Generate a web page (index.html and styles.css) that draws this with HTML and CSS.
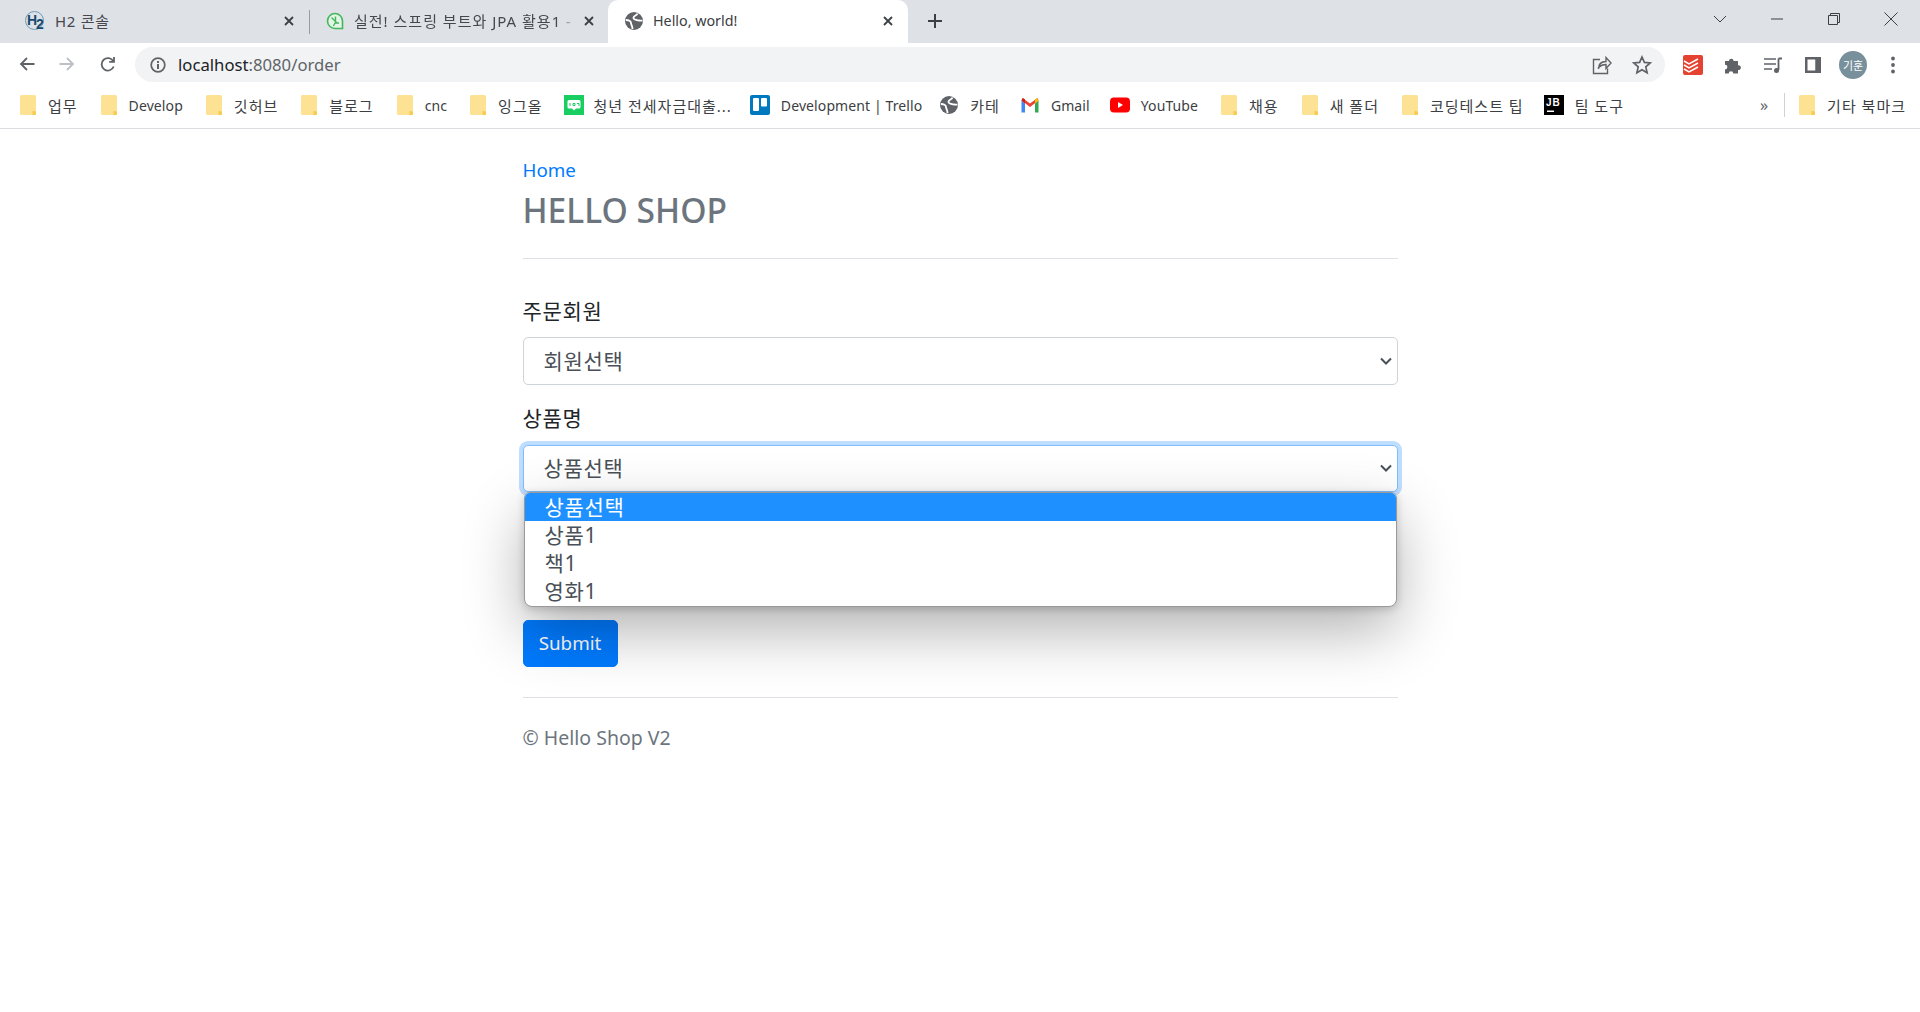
FILE: index.html
```html
<!DOCTYPE html>
<html lang="ko">
<head>
    <meta charset="UTF-8">
    <title>Hello, world!</title>
    <link rel="stylesheet" href="styles.css">
</head>
<body>
    <svg class="defs" width="0" height="0">
        <symbol id="folder" viewBox="0 0 16 20">
            <path d="M1.5 0h13a1.5 1.5 0 0 1 1.500 1.500v17a1.500 1.500 0 0 1-1.500 1.500h-13a1.500 1.500 0 0 1-1.500-1.500v-17a1.500 1.500 0 0 1 1.500-1.500z" fill="#fde293"/>
            <path d="M12.500 20v-4h1.500a2 2 0 0 1 2 2v.5a1.500 1.500 0 0 1-1.500 1.500z" fill="#f7cb4d"/>
        </symbol>
        <symbol id="globe" viewBox="0 0 18 18">
            <circle cx="9" cy="9" r="9" fill="#5f6368"/>
            <path d="M12.500 1.500c-.5 2-3.500 2-4 4s2.500 2.500 4.500 2.800 3 .7 4.500.2M.8 8c3 0 5.200 1 5.200 3s1.500 2.500 1.500 6" fill="none" stroke="#fff" stroke-width="1.800"/>
        </symbol>
    </svg>

    <div class="tabstrip">
        <div class="tab">
            <svg class="favicon favicon-h2" viewBox="0 0 20 22">
                <circle cx="9.500" cy="9.500" r="9" fill="none" stroke="#6d9ab5" stroke-width="1"/>
                <text x="2" y="14" class="h2-logo">H</text>
                <text x="11" y="18" class="h2-logo">2</text>
            </svg>
            <span class="tab-title">H2 콘솔</span>
            <svg class="tab-close" viewBox="0 0 10 10"><path d="M1 1l8 8M9 1l-8 8"/></svg>
        </div>
        <div class="tab tab-sep">
            <svg class="favicon" viewBox="0 0 18 18">
                <path d="M9 1.500a7.500 7.500 0 0 1 7.500 7.500v7.500h-7.500a7.500 7.500 0 0 1 0-15z" fill="#e3f5e6" stroke="#43b75a" stroke-width="1.600"/>
                <path d="M5.500 5.500l5 5M9.500 4.500v6.500h3.500M9 11l-1.500 3" fill="none" stroke="#43b75a" stroke-width="1.400"/>
            </svg>
            <span class="tab-title tab-title-fade">실전! 스프링 부트와 JPA 활용1 -</span>
            <svg class="tab-close" viewBox="0 0 10 10"><path d="M1 1l8 8M9 1l-8 8"/></svg>
        </div>
        <div class="tab tab-active">
            <svg class="favicon" viewBox="0 0 18 18"><use href="#globe"/></svg>
            <span class="tab-title">Hello, world!</span>
            <svg class="tab-close" viewBox="0 0 10 10"><path d="M1 1l8 8M9 1l-8 8"/></svg>
        </div>
        <svg class="new-tab" viewBox="0 0 14 14"><path d="M7 0v14M0 7h14"/></svg>
        <div class="window-controls">
            <svg class="win-icon" viewBox="0 0 14 14"><path d="M1 4l6 6 6-6"/></svg>
            <svg class="win-icon" viewBox="0 0 14 14"><path d="M1 7h12"/></svg>
            <svg class="win-icon" viewBox="0 0 14 14"><path d="M1.500 3.500h9v9h-9zM3.500 3.500v-2h9v9h-2"/></svg>
            <svg class="win-icon" viewBox="0 0 14 14"><path d="M0.500 0.500l13 13M13.500 0.500l-13 13"/></svg>
        </div>
    </div>

    <div class="toolbar">
        <svg class="nav-icon" viewBox="0 0 16 16"><path d="M15.500 8h-13M8 2l-6 6 6 6"/></svg>
        <svg class="nav-icon nav-disabled" viewBox="0 0 16 16"><path d="M.5 8h13M8 2l6 6-6 6"/></svg>
        <svg class="nav-icon nav-reload" viewBox="0 0 16 16"><path d="M13.700 10.500a6.200 6.200 0 1 1-.4-5.200M14 1v4.800h-4.800"/></svg>
        <div class="omnibox">
            <svg class="info-icon" viewBox="0 0 16 16">
                <circle cx="8" cy="8" r="6.800" fill="none" stroke="#5f6368" stroke-width="1.700"/>
                <path d="M7 7h2v5h-2zM7 4h2v2h-2z" fill="#5f6368"/>
            </svg>
            <span class="url">localhost<span class="url-path">:8080/order</span></span>
            <svg class="omni-icon share-icon" viewBox="0 0 20 20">
                <path d="M8 4.500h-6.500v14h14v-5M6.500 14c0-5 3-7.500 7.500-7.500v-4l5 5.500-5 5.500v-4c-3 0-5.500 1-7.500 3z" fill="none" stroke="#5f6368" stroke-width="1.400"/>
            </svg>
            <svg class="omni-icon" viewBox="0 0 20 20">
                <path d="M10 2l2.400 5.400 5.800.6-4.400 3.900 1.300 5.800-5.100-3-5.100 3 1.300-5.800-4.400-3.900 5.800-.6z" fill="none" stroke="#5f6368" stroke-width="1.700"/>
            </svg>
        </div>
        <div class="ext-icons">
            <svg class="ext-icon" viewBox="0 0 20 20">
                <rect width="20" height="20" rx="2" fill="#e44332"/>
                <path d="M1 6l5 3 9-5M1 10l5 3 9-5M1 14l5 3 9-5" fill="none" stroke="#fff" stroke-width="1.500"/>
            </svg>
            <svg class="ext-icon" viewBox="0 0 20 20">
                <path d="M2 6h4a2.300 2.300 0 1 1 4.600 0h4.400v4.300a2.400 2.400 0 1 1 0 4.700v3.500h-4.700a2.300 2.300 0 1 0-4.600 0h-3.700v-4a2.400 2.400 0 1 0 0-4.800z" fill="#5f6368"/>
            </svg>
            <svg class="ext-icon" viewBox="0 0 20 20">
                <path d="M1 4h12M1 9h12M1 14h8" stroke="#5f6368" stroke-width="1.600" fill="none"/>
                <path d="M15.500 3.500v11.500M15.500 3.500h3.500" stroke="#5f6368" stroke-width="1.800" fill="none"/>
                <circle cx="13.500" cy="15.500" r="2.500" fill="#5f6368"/>
            </svg>
            <svg class="ext-icon" viewBox="0 0 20 20">
                <path d="M2 2h16v16h-16zM4.500 4.500v11h8v-11z" fill="#5f6368" fill-rule="evenodd"/>
                <rect x="12.500" y="3" width="5" height="14" fill="#5f6368"/>
            </svg>
            <span class="avatar">기훈</span>
            <svg class="ext-icon dots-icon" viewBox="0 0 20 20">
                <circle cx="10" cy="3.500" r="1.900" fill="#5f6368"/>
                <circle cx="10" cy="10" r="1.900" fill="#5f6368"/>
                <circle cx="10" cy="16.500" r="1.900" fill="#5f6368"/>
            </svg>
        </div>
    </div>

    <div class="bookmarks">
        <a class="bm"><svg class="bm-folder"><use href="#folder"/></svg>업무</a>
        <a class="bm bm-en"><svg class="bm-folder"><use href="#folder"/></svg>Develop</a>
        <a class="bm"><svg class="bm-folder"><use href="#folder"/></svg>깃허브</a>
        <a class="bm"><svg class="bm-folder"><use href="#folder"/></svg>블로그</a>
        <a class="bm bm-en"><svg class="bm-folder"><use href="#folder"/></svg>cnc</a>
        <a class="bm"><svg class="bm-folder"><use href="#folder"/></svg>잉그올</a>
        <a class="bm bm-blog">
            <svg class="bm-icon" viewBox="0 0 20 20">
                <rect width="20" height="20" fill="#19ce60"/>
                <path d="M5 5h10a1.500 1.500 0 0 1 1.500 1.500v5.500a1.500 1.500 0 0 1-1.500 1.500h-3l-2 2-2-2h-3a1.500 1.500 0 0 1-1.500-1.500v-5.500a1.500 1.500 0 0 1 1.500-1.500z" fill="#fff"/>
                <path d="M6 8v3M9 8.500h2v2h-2zM13 8.500h2v2.500" fill="none" stroke="#19ce60"/>
            </svg>청년 전세자금대출...
        </a>
        <a class="bm bm-en bm-trello">
            <svg class="bm-icon" viewBox="0 0 20 20">
                <rect width="20" height="20" rx="2" fill="#0079bf"/>
                <rect x="3" y="3" width="6" height="13" rx="1" fill="#fff"/>
                <rect x="11" y="3" width="6" height="8.500" rx="1" fill="#fff"/>
            </svg>Development | Trello
        </a>
        <a class="bm"><svg class="bm-icon bm-globe" viewBox="0 0 18 18"><use href="#globe"/></svg>카테</a>
        <a class="bm bm-en">
            <svg class="bm-icon" viewBox="0 0 20 16">
                <path d="M1.500 3.500v12h3.500v-9z" fill="#4285f4"/>
                <path d="M18.500 3.500v12h-3.500v-9z" fill="#34a853"/>
                <path d="M1.500 3.500l8.500 6.500 8.500-6.500-1-2.500-7.500 5.500-7.500-5.500z" fill="#ea4335"/>
                <path d="M15 6.500l3.500-3-1.500-2.500-2 1.500z" fill="#fbbc04"/>
                <path d="M1.500 3.500l3.500 3v-4l-2-1.500z" fill="#c5221f"/>
            </svg>Gmail
        </a>
        <a class="bm bm-en">
            <svg class="bm-icon" viewBox="0 0 20 20">
                <rect y="2.500" width="20" height="15" rx="4" fill="#f00"/>
                <path d="M8 7l5 3-5 3z" fill="#fff"/>
            </svg>YouTube
        </a>
        <a class="bm"><svg class="bm-folder"><use href="#folder"/></svg>채용</a>
        <a class="bm"><svg class="bm-folder"><use href="#folder"/></svg>새 폴더</a>
        <a class="bm"><svg class="bm-folder"><use href="#folder"/></svg>코딩테스트 팁</a>
        <a class="bm">
            <svg class="bm-icon" viewBox="0 0 20 20">
                <rect width="20" height="20" fill="#000"/>
                <text x="2" y="11" class="jb-logo">JB</text>
                <rect x="3" y="15.500" width="7" height="1.500" fill="#fff"/>
            </svg>팀 도구
        </a>
        <div class="bm-right">
            <span class="bm-more">»</span>
            <span class="bm-divider"></span>
            <a class="bm"><svg class="bm-folder"><use href="#folder"/></svg>기타 북마크</a>
        </div>
    </div>

    <div class="container">
        <div class="header">
            <a class="home-link" href="#">Home</a>
            <h3 class="shop-title">HELLO SHOP</h3>
        </div>
        <form>
            <div class="form-group">
                <label class="field-label" for="member">주문회원</label>
                <select class="form-control" id="member">
                    <option>회원선택</option>
                </select>
            </div>
            <div class="form-group form-group-open">
                <label class="field-label" for="item">상품명</label>
                <select class="form-control form-control-focus" id="item">
                    <option>상품선택</option>
                </select>
                <ul class="select-popup">
                    <li class="popup-option popup-selected">상품선택</li>
                    <li class="popup-option">상품1</li>
                    <li class="popup-option">책1</li>
                    <li class="popup-option">영화1</li>
                </ul>
            </div>
            <div class="covered-field"></div>
            <button class="btn-submit" type="button">Submit</button>
        </form>
        <div class="footer">© Hello Shop V2</div>
    </div>
</body>
</html>
```

FILE: styles.css
```css
* {
    box-sizing: border-box;
}
body {
    margin: 0;
    background-color: #fff;
    color: #212529;
    font-family: "Noto Sans", "Noto Sans CJK KR", sans-serif;
}
.defs {
    position: absolute;
}

/* browser chrome */
.tabstrip {
    display: flex;
    align-items: center;
    height: 43px;
    padding-left: 8px;
    background-color: #dee1e6;
}
.tab {
    display: flex;
    align-items: center;
    width: 300px;
    height: 43px;
    padding: 0 14px 2px 18px;
    font-size: 15px;
    letter-spacing: 0.7px;
    color: #45484c;
}
.tab-sep {
    position: relative;
}
.tab-sep::before {
    content: "";
    position: absolute;
    left: 1px;
    top: 10px;
    height: 24px;
    border-left: 1px solid #9a9ca0;
}
.tab-active {
    background-color: #fff;
    border-radius: 10px 10px 0 0;
    color: #3c4043;
    font-size: 14.300px;
    letter-spacing: 0;
    padding-left: 17px;
    padding-right: 15px;
}
.favicon {
    width: 18px;
    height: 18px;
    flex: none;
    margin-right: 10px;
}
.favicon-h2 {
    width: 20px;
    height: 22px;
    margin-top: 3px;
    margin-left: -1px;
    margin-right: 10px;
}
.h2-logo {
    font: bold 14px "Liberation Sans", sans-serif;
    fill: #174a70;
}
.tab-title {
    flex: 1;
    white-space: nowrap;
    overflow: hidden;
}
.tab-title-fade {
    letter-spacing: 1px;
    mask-image: linear-gradient(to right, #000 92%, transparent);
}
.tab-close {
    width: 10px;
    height: 10px;
    flex: none;
    margin-left: 8px;
    fill: none;
    stroke: #3c4043;
    stroke-width: 1.800;
}
.new-tab {
    width: 14px;
    height: 14px;
    margin-left: 20px;
    margin-top: -2px;
    fill: none;
    stroke: #3c4043;
    stroke-width: 2;
}
.window-controls {
    display: flex;
    align-items: center;
    gap: 43px;
    margin-left: auto;
    padding-right: 22px;
    margin-top: -6px;
}
.win-icon {
    width: 14px;
    height: 14px;
    fill: none;
    stroke: #3c4043;
    stroke-width: 1;
}
.toolbar {
    display: flex;
    align-items: center;
    height: 41px;
    padding-left: 19px;
    background-color: #fff;
}
.nav-icon {
    width: 16px;
    height: 16px;
    margin-right: 24px;
    fill: none;
    stroke: #5f6368;
    stroke-width: 1.800;
}
.nav-disabled {
    stroke: #bdc1c6;
}
.nav-reload {
    margin-left: 1px;
    margin-right: 23px;
}
.omnibox {
    display: flex;
    align-items: center;
    width: 1530px;
    height: 35px;
    margin-left: -4px;
    margin-top: 2px;
    padding: 0 13px 0 15px;
    background-color: #f1f3f4;
    border-radius: 18px;
}
.info-icon {
    width: 16px;
    height: 16px;
    margin-right: 12px;
}
.url {
    flex: 1;
    font-size: 16.700px;
    color: #202124;
}
.url-path {
    color: #5f6368;
}
.omni-icon {
    width: 20px;
    height: 20px;
    margin-left: 20px;
}
.ext-icons {
    display: flex;
    align-items: center;
    margin-left: 18px;
    margin-top: 2px;
}
.ext-icon {
    width: 20px;
    height: 20px;
    margin-right: 20px;
}
.avatar {
    display: flex;
    align-items: center;
    justify-content: center;
    width: 28px;
    height: 28px;
    margin-left: -4px;
    margin-right: 16px;
    border-radius: 50%;
    background-color: #78909c;
    color: #fff;
    font-size: 11px;
}
.dots-icon {
    margin-right: 0;
}
.bookmarks {
    display: flex;
    align-items: center;
    height: 45px;
    padding-left: 20px;
    padding-bottom: 2px;
    background-color: #fff;
    border-bottom: 1px solid #dadce0;
    font-size: 15px;
    letter-spacing: 1px;
    color: #3c4043;
}
.bm {
    display: flex;
    align-items: center;
    margin-right: 23px;
    white-space: nowrap;
}
.bm-en {
    font-size: 14px;
    letter-spacing: 0.1px;
}
.bm-folder {
    width: 16px;
    height: 20px;
    margin-right: 12px;
}
.bm-icon {
    width: 20px;
    height: 20px;
    margin-left: -3px;
    margin-right: 11px;
}
.bm-blog {
    margin-right: 21px;
}
.bm-blog .bm-icon {
    margin-left: -1px;
    margin-right: 9px;
}
.bm-trello {
    margin-right: 21px;
}
.bm-globe {
    width: 18px;
    height: 18px;
    margin-right: 12px;
}
.jb-logo {
    font: bold 10px "Liberation Sans", sans-serif;
    fill: #fff;
}
.bm-right {
    display: flex;
    align-items: center;
    margin-left: auto;
}
.bm-right .bm {
    margin-right: 14px;
}
.bm-more {
    margin-right: 15px;
    font-size: 16px;
    color: #5f6368;
}
.bm-divider {
    height: 24px;
    margin-right: 14px;
    border-left: 1px solid #cfd2d6;
}

/* page */
.container {
    width: 875px;
    margin: 0 auto;
    padding-top: 26px;
}
.header {
    height: 104px;
    margin-bottom: 38px;
    border-bottom: 1px solid #dee2e6;
}
.home-link {
    display: block;
    font-size: 18.800px;
    line-height: 30px;
    color: #007bff;
    text-decoration: none;
}
.shop-title {
    margin: 4px 0 0;
    font-size: 33.600px;
    line-height: 42px;
    font-weight: 500;
    color: #6c757d;
}
.form-group {
    margin-bottom: 20px;
}
.form-group-open {
    position: relative;
}
.field-label {
    display: block;
    margin-bottom: 12px;
    font-size: 21px;
    letter-spacing: 0.7px;
    line-height: 28px;
}
.form-group-open .field-label {
    margin-top: -1px;
    margin-bottom: 13px;
}
.form-control {
    display: block;
    width: 100%;
    height: 47.500px;
    padding: 0 20px;
    border: 1px solid #ced4da;
    border-radius: 5px;
    background: #fff url("data:image/svg+xml,%3Csvg xmlns='http://www.w3.org/2000/svg' viewBox='0 0 12 8'%3E%3Cpath d='M1 1.500l5 5 5-5' fill='none' stroke='%23495057' stroke-width='2'/%3E%3C/svg%3E") no-repeat right 5px center / 12px 8px;
    appearance: none;
    font-family: inherit;
    font-size: 21px;
    letter-spacing: 0.7px;
    color: #495057;
}
.form-control-focus {
    border-color: #80bdff;
    box-shadow: 0 0 0 4px rgba(0, 123, 255, 0.25);
}
.select-popup {
    position: absolute;
    left: 1px;
    right: 1px;
    top: 88.500px;
    margin: 0;
    padding: 0 0 1px;
    list-style: none;
    overflow: hidden;
    background-color: #fff;
    border: 1px solid #9a9a9a;
    border-radius: 6px 6px 8px 8px;
    box-shadow: 0 2px 8px rgba(0, 0, 0, 0.18), 0 24px 60px rgba(0, 0, 0, 0.3);
    z-index: 2;
}
.popup-option {
    height: 28px;
    padding-left: 20px;
    font-size: 21px;
    letter-spacing: 0.7px;
    line-height: 28px;
    color: #495057;
}
.popup-selected {
    background-color: #1e90ff;
    color: #fff;
}
.covered-field {
    height: 87.500px;
    margin-bottom: 20px;
}
.btn-submit {
    display: block;
    width: 95px;
    height: 47.500px;
    padding: 0;
    border: 1px solid #007bff;
    border-radius: 5px;
    background-color: #007bff;
    color: #fff;
    font-family: inherit;
    font-size: 18.800px;
}
.footer {
    margin-top: 30px;
    padding-top: 25px;
    border-top: 1px solid #dee2e6;
    font-size: 19.500px;
    line-height: 30px;
    color: #6c757d;
}
```
